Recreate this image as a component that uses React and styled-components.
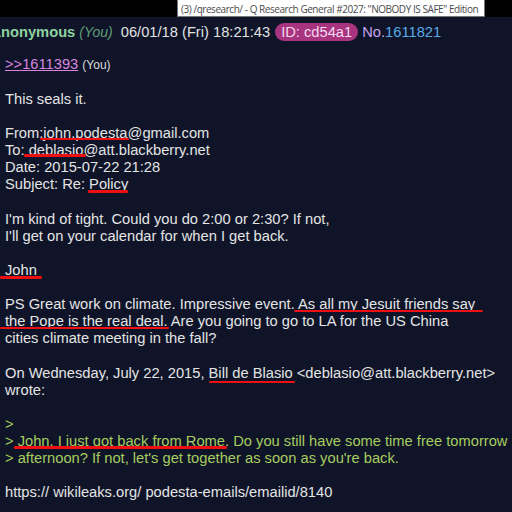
import React from "react";
import styled, { createGlobalStyle } from "styled-components";

const Global = createGlobalStyle`
  html, body { margin: 0; padding: 0; background: #0f1429; }
  body { font-family: "Liberation Sans", Arial, sans-serif; }
`;

const Page = styled.div`
  width: 512px;
  height: 512px;
  overflow: hidden;
  background: #0f1429;
  font-family: "Liberation Sans", Arial, sans-serif;
  font-size: 14.7px;
  color: #e4e4e4;
`;

const TopStrip = styled.div`
  height: 17px;
  background: #000;
  display: flex;
  padding-left: 177px;
`;

const Tooltip = styled.div`
  box-sizing: border-box;
  width: 308px;
  height: 17px;
  background: #fff;
  border: 1px solid #767676;
  border-top: none;
  color: #4a4a4a;
  font-family: "Open Sans", "Noto Sans", sans-serif;
  font-size: 10px;
  letter-spacing: -0.45px;
  line-height: 15px;
  padding: 2px 0 0 3px;
  white-space: nowrap;
  overflow: hidden;
`;

const Post = styled.div`
  padding: 6px 0 0 5px;
`;

const Header = styled.div`
  display: flex;
  align-items: center;
  height: 18px;
  white-space: nowrap;
  gap: 4px;
`;

const Name = styled.span`
  margin-left: -14.6px;
  color: #8fd3a0;
  font-weight: bold;
`;

const You = styled.span`
  color: #5f9f76;
  font-style: italic;
  font-size: 14px;
  margin-right: 4px;
`;

const DateText = styled.span`
  color: #e2e2e2;
  margin-right: 1px;
`;

const Pill = styled.span`
  display: inline-block;
  height: 18px;
  line-height: 18px;
  padding: 0 6px;
  border-radius: 9px;
  background: #a8347f;
  color: #f4d8ee;
`;

const PostNo = styled.span`
  color: #c9a3f2;
`;

const PostNum = styled.span`
  color: #5aaae8;
`;

const QuoteLine = styled.div`
  margin-top: 15px;
  height: 17px;
  line-height: 17px;
  white-space: nowrap;
`;

const QuoteLink = styled.span`
  color: #d985e0;
  text-decoration: underline;
  text-decoration-color: #d985e0;
`;

const SmallYou = styled.span`
  font-size: 12px;
  color: #dcdcdc;
`;

const Body = styled.div`
  margin-top: 18px;
`;

const Line = styled.div`
  height: 17.1px;
  line-height: 17.1px;
  white-space: nowrap;
  color: ${(p) => (p.$green ? "#a6cd5e" : "#e4e4e4")};
`;

const Mark = styled.span`
  position: relative;
  &::after {
    content: "";
    position: absolute;
    left: ${(p) => -(p.$l || 0)}px;
    right: ${(p) => -(p.$r || 0)}px;
    bottom: ${(p) => 1.85 - (p.$d || 0)}px;
    height: 2.4px;
    border-radius: 1.2px;
    background: #ee1010;
  }
`;

export default function App() {
  return (
    <>
      <Global />
      <Page>
        <TopStrip>
          <Tooltip>(3) /qresearch/ - Q Research General #2027: "NOBODY IS SAFE" Edition</Tooltip>
        </TopStrip>
        <Post>
          <Header>
            <Name>Anonymous</Name>
            <You>(You)</You>
            <DateText>06/01/18 (Fri) 18:21:43</DateText>
            <Pill>ID: cd54a1</Pill>
            <span>
              <PostNo>No.</PostNo>
              <PostNum>1611821</PostNum>
            </span>
          </Header>
          <QuoteLine>
            <QuoteLink>&gt;&gt;1611393</QuoteLink> <SmallYou>(You)</SmallYou>
          </QuoteLine>
          <Body>
            <Line>This seals it.</Line>
            <Line />
            <Line>
              From:<Mark $l={3} $r={2} $d={0.7}>john.podesta</Mark>@gmail.com
            </Line>
            <Line>
              To:<Mark $l={1} $r={3} $d={0.2}> deblasio</Mark>@att.blackberry.net
            </Line>
            <Line>Date: 2015-07-22 21:28</Line>
            <Line>
              Subject: Re: <Mark $l={1} $r={0} $d={2}>Policy</Mark>
            </Line>
            <Line />
            <Line>I'm kind of tight. Could you do 2:00 or 2:30? If not,</Line>
            <Line>I'll get on your calendar for when I get back.</Line>
            <Line />
            <Line>
              <Mark $l={5} $r={5} $d={2.5}>John</Mark>
            </Line>
            <Line />
            <Line>
              PS Great work on climate. Impressive event.{" "}
              <Mark $l={4} $r={8} $d={2}>As all my Jesuit friends say</Mark>
            </Line>
            <Line>
              <Mark $l={5} $r={1} $d={1.6}>the Pope is the real deal.</Mark> Are you going to go to LA for the US China
            </Line>
            <Line>cities climate meeting in the fall?</Line>
            <Line />
            <Line>
              On Wednesday, July 22, 2015, <Mark $l={0} $r={2} $d={4.5}>Bill de Blasio</Mark>{" "}
              &lt;deblasio@att.blackberry.net&gt;
            </Line>
            <Line>wrote:</Line>
            <Line />
            <Line $green>&gt;</Line>
            <Line $green>
              &gt; <Mark $l={4} $r={2} $d={1.5}>John. I just got back from Rome</Mark>. Do you still have some time free tomorrow
            </Line>
            <Line $green>&gt; afternoon? If not, let's get together as soon as you're back.</Line>
            <Line />
            <Line>https:// wikileaks.org/ podesta-emails/emailid/8140</Line>
          </Body>
        </Post>
      </Page>
    </>
  );
}
